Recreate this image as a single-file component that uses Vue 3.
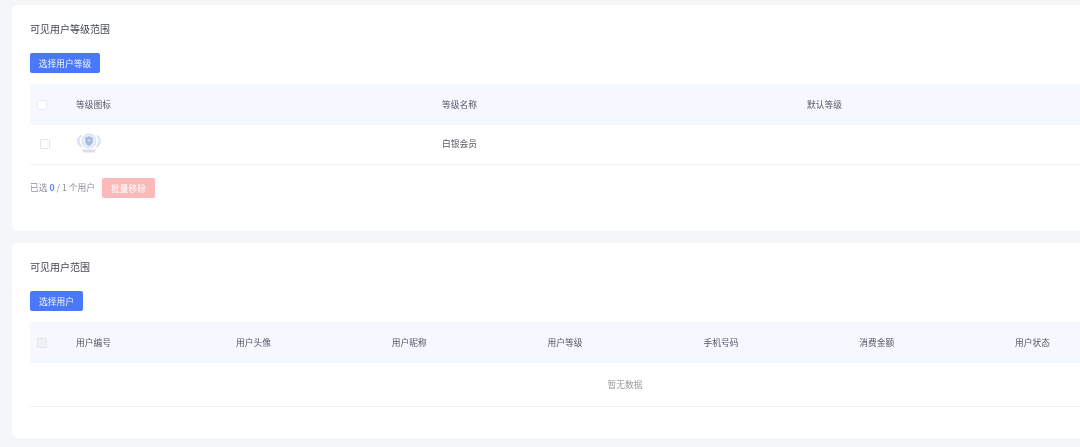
<script setup>
const levelCols = ['等级图标', '等级名称', '默认等级']
const userCols = ['用户编号', '用户头像', '用户昵称', '用户等级', '手机号码', '消费金额', '用户状态']
</script>

<template>
  <div class="page">
    <section class="card first">
      <h3 class="title">可见用户等级范围</h3>
      <button class="btn wide">选择用户等级</button>
      <div class="table">
        <div class="head level-grid">
          <span class="cb cb-head"></span>
          <span v-for="c in levelCols" :key="c">{{ c }}</span>
        </div>
        <div class="row level-grid">
          <span class="cb cb-row"></span>
          <span class="icon-cell">
            <svg width="26" height="22" viewBox="0 0 26 22" fill="none">
              <path d="M4.500 4C2 7 2 11 5 14.500M21.500 4c2.500 3 2.500 7-.5 10.500" stroke="#d5ddf0" stroke-width="1.800" stroke-linecap="round"/>
              <path d="M1.500 7v5M24.500 7v5" stroke="#e6ebf7" stroke-width="1.500" stroke-linecap="round"/>
              <circle cx="13" cy="9" r="7" fill="#e9eefb" stroke="#d3dcf3" stroke-width="1"/>
              <path d="M13 4.200l3.800 1.300V9c0 2.400-1.600 4-3.800 5C10.800 13 9.200 11.400 9.200 9V5.500z" fill="#a3b9f2"/>
              <circle cx="13" cy="8.500" r="1.300" fill="#f2dc8c"/>
              <path d="M6 17.500h14l-1.500 3h-11z" fill="#d9dfee"/>
            </svg>
          </span>
          <span class="cell-text">白银会员</span>
          <span></span>
        </div>
      </div>
      <div class="footer">
        <span class="count">已选 <b>0</b> / 1 个用户</span>
        <button class="btn danger">批量移除</button>
      </div>
    </section>

    <section class="card second">
      <h3 class="title">可见用户范围</h3>
      <button class="btn narrow">选择用户</button>
      <div class="table">
        <div class="head user-grid">
          <span class="cb cb-disabled"></span>
          <span v-for="c in userCols" :key="c">{{ c }}</span>
        </div>
        <div class="empty">暂无数据</div>
      </div>
    </section>
  </div>
</template>

<style>
html, body { margin: 0; background: #f5f6f8; overflow: hidden; }
</style>

<style scoped>
.page {
  height: 447px;
  overflow: hidden;
  box-sizing: border-box;
  padding: 5px 0 0 12px;
  background: #f5f6f8;
  font-family: "Noto Sans CJK SC", "Liberation Sans", sans-serif;
  font-size: 8.750px;
  color: #55585e;
  filter: blur(0.35px);
}
.card {
  width: 1200px;
  box-sizing: border-box;
  background: #fff;
  border-radius: 6px;
  padding: 14px 0 0 18px;
}
.first { height: 226px; margin-bottom: 12px; }
.second { height: 195px; }
.title {
  margin: 0 0 14px;
  height: 20px;
  line-height: 19px;
  font-size: 10px;
  font-weight: 400;
  color: #44474d;
}
.btn {
  display: block;
  height: 20px;
  padding: 0;
  border: 0;
  border-radius: 2px;
  background: #4a78fa;
  color: #f2f5ff;
  font: inherit;
}
.wide { width: 70px; }
.narrow { width: 53px; }
.danger { width: 53px; background: #fbb9b9; color: #fff; }
.table { margin-top: 11px; width: 1190px; }
.head { height: 41px; background: #f5f8fe; }
.level-grid { display: grid; grid-template-columns: 46px 366px repeat(2, 365px); align-items: center; }
.user-grid { display: grid; grid-template-columns: 46px 160px repeat(6, 155.800px); align-items: center; }
.row { height: 39px; border-bottom: 1px solid #f0f1f4; }
.cell-text { margin-bottom: 2px; }
.cb {
  display: block;
  box-sizing: border-box;
  width: 10px;
  height: 10px;
  border-radius: 1.500px;
  margin-left: 7px;
}
.cb-head { background: #fff; border: 1px solid #e9ebf2; }
.cb-row { background: #fff; border: 1px solid #e4e5ea; margin-left: 10px; margin-bottom: 1px; }
.cb-disabled { background: #eef0f6; border: 1px solid #e3e5ed; }
.icon-cell { display: flex; height: 22px; margin-bottom: 3px; }
.footer { display: flex; align-items: center; margin-top: 13px; }
.count { color: #8e9196; margin-right: 7px; margin-bottom: 2px; }
.count b { color: #5f84fa; font-weight: 700; }
.empty {
  height: 43px;
  line-height: 43px;
  text-align: center;
  color: #9a9ca1;
  border-bottom: 1px solid #f0f1f4;
}
</style>
